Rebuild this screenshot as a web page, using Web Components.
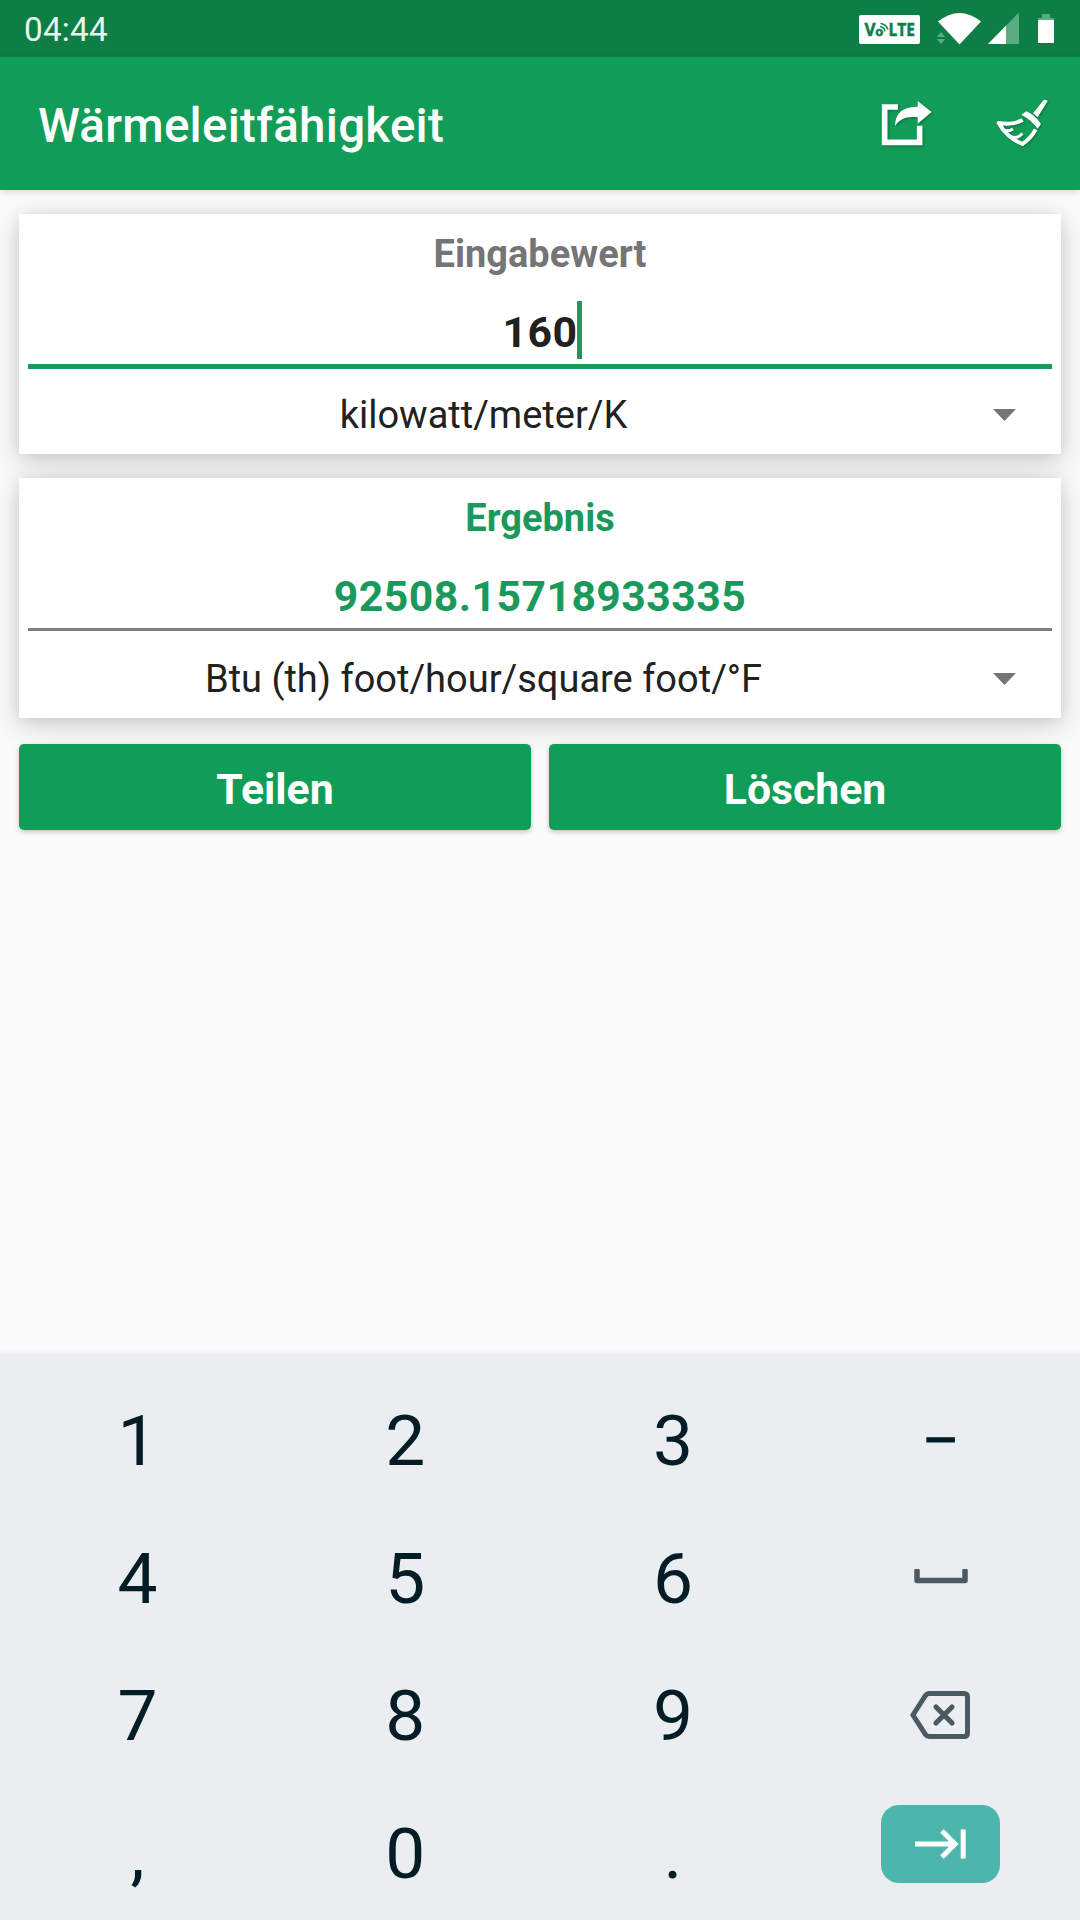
<!DOCTYPE html>
<html lang="de">
<head>
<meta charset="utf-8">
<title>Wärmeleitfähigkeit</title>
<style>
    html, body {
        margin: 0;
        height: 1920px;
        overflow: hidden;
    }

    body {
        --green: #119d57;
        --green-dark: #0d7e46;
        display: flex;
        flex-direction: column;
        width: 1080px;
        background: #fafafa;
        font-family: Roboto, sans-serif;
        color: #212121;
    }

    main {
        flex: 1;
        display: flex;
        flex-direction: column;
        gap: 24px;
        padding: 24px 19px 0;
    }

    .actions {
        display: grid;
        grid-template-columns: 1fr 1fr;
        gap: 18px;
        margin-top: 2px;
    }
</style>
</head>
<body>
<status-bar>04:44</status-bar>
<app-bar>Wärmeleitfähigkeit</app-bar>
<main>
    <value-card label="Eingabewert" value="160" active>kilowatt/meter/K</value-card>
    <value-card label="Ergebnis" value="92508.15718933335" result>Btu (th) foot/hour/square foot/°F</value-card>
    <div class="actions">
        <action-button>Teilen</action-button>
        <action-button>Löschen</action-button>
    </div>
</main>
<num-pad></num-pad>

<script>
class BaseElement extends HTMLElement {
    connectedCallback() {
        const template = document.createElement('template');
        template.innerHTML = this.render();
        this.attachShadow({ mode: 'open' }).append(template.content.cloneNode(true));
    }
}

class StatusBar extends BaseElement {
    render() {
        return `
            <style>
                :host {
                    display: flex;
                    align-items: center;
                    justify-content: space-between;
                    box-sizing: border-box;
                    height: 57px;
                    padding: 0 26px 0 24px;
                    background: var(--green-dark);
                    color: #e8f6ee;
                    font-size: 33.25px;
                    letter-spacing: .2px;
                }

                .time { padding-top: 2px; }

                .icons {
                    display: flex;
                    align-items: center;
                    letter-spacing: 0;
                }

                svg { display: block; }
            </style>
            <span class="time"><slot></slot></span>
            <div class="icons">
                <svg width="195" height="57" viewBox="859 0 195 57">
                    <rect x="859" y="15" width="61" height="29" rx="2" fill="#fff"/>
                    <g fill="#0d7e46" stroke="#0d7e46" stroke-width=".5" font-family="Open Sans, sans-serif" font-weight="700">
                        <text x="864.5" y="36" font-size="17">V</text>
                        <text x="875.3" y="36" font-size="13">o</text>
                        <text x="888.5" y="36" font-size="17" textLength="26.5" lengthAdjust="spacingAndGlyphs">LTE</text>
                    </g>
                    <path d="M880 26.500a6 6 0 0 1 5 5M880.500 23.500a9 9 0 0 1 7.500 6" fill="none" stroke="#0d7e46" stroke-width="1.500"/>
                    <path d="M938 21.500Q959.500 4.500 981 21.500L959.500 44.500Z" fill="#fff"/>
                    <path d="M941 32l4 5h-8zM941 44l4-5h-8z" fill="#5cab82"/>
                    <path d="M988 44L1019 12.500V44Z" fill="#5cab82"/>
                    <path d="M988 44L1006 25.700V44Z" fill="#fff"/>
                    <path d="M1042 14h8v4h4v3h-16v-3h4z" fill="#5cab82"/>
                    <path d="M1038 20h16v23h-16z" fill="#fff"/>
                </svg>
            </div>
        `;
    }
}

class AppBar extends BaseElement {
    render() {
        return `
            <style>
                :host {
                    display: flex;
                    align-items: center;
                    box-sizing: border-box;
                    height: 133px;
                    padding: 0 30px 0 38px;
                    background: var(--green);
                    color: #fff;
                    box-shadow: 0 2px 6px rgba(0, 0, 0, .13);
                }

                h1 {
                    flex: 1;
                    margin: 0;
                    padding-top: 5px;
                    font-size: 47.5px;
                    font-weight: 500;
                    letter-spacing: .27px;
                }

                .tools {
                    display: flex;
                    gap: 61px;
                    margin-bottom: 2px;
                }

                svg {
                    display: block;
                    filter: drop-shadow(1px 1px 1px rgba(0, 0, 0, .3));
                }
            </style>
            <h1><slot></slot></h1>
            <div class="tools">
                <svg width="54" height="48" viewBox="90 84 162 144">
                    <path d="M144 108H104V214H209V164" fill="none" stroke="#fff" stroke-width="17"/>
                    <path d="M135 165C136 126 157 107 203 107V90L245 123L203 158V139C169 135 150 143 135 165Z" fill="#fff"/>
                </svg>
                <svg width="55" height="48" viewBox="435 84 165 144">
                    <path d="M549 127L581 87Q587 84 593 90L563 139Z" fill="#fff"/>
                    <path d="M514 131L529 121Q556 132 573 159L563 173Q544 147 514 131Z" fill="#fff"/>
                    <path d="M518 147Q490 163 446 156Q471 200 517 219Q543 202 557 175" fill="none" stroke="#fff" stroke-width="12" stroke-linejoin="round"/>
                    <path d="M462 177Q475 183 489 174M482 197Q503 205 517 187" fill="none" stroke="#fff" stroke-width="9"/>
                </svg>
            </div>
        `;
    }
}

class ValueCard extends BaseElement {
    render() {
        return `
            <style>
                :host {
                    display: block;
                    height: 240px;
                    background: #fff;
                    text-align: center;
                    box-shadow: 0 8px 30px rgba(0, 0, 0, .15), 0 2px 14px rgba(0, 0, 0, .1);
                }

                .label {
                    height: 80px;
                    line-height: 80px;
                    font-size: 38px;
                    font-weight: 700;
                    color: #757575;
                }

                .field {
                    height: 70px;
                    margin: 0 9px 2px;
                    line-height: 76px;
                    font-size: 42.75px;
                    font-weight: 700;
                    letter-spacing: .45px;
                    border-bottom: 3px solid #808080;
                }

                .value {
                    position: relative;
                }

                :host([active]) .field {
                    margin-bottom: 0;
                    border-bottom: 5px solid #1b995c;
                }

                /* text caret */
                :host([active]) .value::after {
                    content: "";
                    position: absolute;
                    left: 100%;
                    top: -6px;
                    width: 5px;
                    height: 58px;
                    background: #1b995c;
                }

                :host([result]) :is(.label, .field) { color: #1b995c; }

                .unit {
                    display: flex;
                    align-items: center;
                    height: 85px;
                    font-size: 38px;
                }

                .unit span {
                    flex: 1;
                    padding-top: 7px;
                }

                .arrow {
                    width: 23px;
                    height: 12px;
                    margin: 7px 45px 0;
                    background: #757575;
                    clip-path: polygon(0 0, 100% 0, 50% 100%);
                }
            </style>
            <div class="label">${this.getAttribute('label')}</div>
            <div class="field"><span class="value">${this.getAttribute('value')}</span></div>
            <div class="unit"><span><slot></slot></span><i class="arrow"></i></div>
        `;
    }
}

class ActionButton extends BaseElement {
    render() {
        return `
            <style>
                :host {
                    display: block;
                    height: 86px;
                    border-radius: 5px;
                    background: var(--green);
                    color: #fff;
                    box-shadow: 0 2px 5px rgba(0, 0, 0, .22);
                    font-size: 42.75px;
                    font-weight: 700;
                    line-height: 91px;
                    text-align: center;
                }
            </style>
            <slot></slot>
        `;
    }
}

class NumPad extends BaseElement {
    #keys = ['1', '2', '3', '–', '4', '5', '6', 'space', '7', '8', '9', 'back', ',', '0', '.', 'next'];

    #icons = {
        space: `<svg width="54" height="15" viewBox="0 0 54 15"><path d="M3 2V11.500H51V2" fill="none" stroke="#4b5a62" stroke-width="5.500" stroke-linecap="round" stroke-linejoin="round"/></svg>`,
        back: `<svg width="61" height="48" viewBox="0 0 61 48"><path d="M19 2.500H54Q57.500 2.500 57.500 6V42Q57.500 45.500 54 45.500H19Q17 45.500 15.500 43.500L3 24L15.500 4.500Q17 2.500 19 2.500Z" fill="none" stroke="#4b5a62" stroke-width="5"/><path d="M26 16L42 32M42 16L26 32" stroke="#4b5a62" stroke-width="5.200" stroke-linecap="round"/></svg>`,
        next: `<svg width="51" height="30" viewBox="0 0 51 30"><path d="M0 15H40M27 2L40 15L27 28M48.200 .500V29.500" fill="none" stroke="#fff" stroke-width="5"/></svg>`,
    };

    #renderKey(key) {
        if (key in this.#icons) {
            return `<div class="key ${key}">${this.#icons[key]}</div>`;
        }
        return `<div class="key ${key === '–' ? 'dash' : 'char'}">${key}</div>`;
    }

    render() {
        return `
            <style>
                :host {
                    display: grid;
                    grid-template-columns: repeat(4, 267.8px);
                    grid-template-rows: repeat(4, 137.5px);
                    box-sizing: border-box;
                    height: 567px;
                    padding: 18px 0 0 3.5px;
                    background: #eaeef1;
                    box-shadow: 0 -1px 4px rgba(0, 0, 0, .06);
                    color: #041c26;
                    font-size: 71.25px;
                    line-height: 1;
                }

                .key {
                    display: flex;
                    align-items: center;
                    justify-content: center;
                }

                .char { padding-top: 2px; }

                .dash {
                    padding-top: 2px;
                    font-size: 56px;
                    -webkit-text-stroke: 1.2px;
                }

                .space svg { margin-bottom: 2px; }

                .back svg { margin-left: -1px; }

                .next {
                    place-self: center;
                    width: 119px;
                    height: 78px;
                    margin-bottom: 16px;
                    border-radius: 18px;
                    background: #4db6ac;
                }
            </style>
            ${this.#keys.map((key) => this.#renderKey(key)).join('')}
        `;
    }
}

customElements.define('status-bar', StatusBar);
customElements.define('app-bar', AppBar);
customElements.define('value-card', ValueCard);
customElements.define('action-button', ActionButton);
customElements.define('num-pad', NumPad);
</script>
</body>
</html>
